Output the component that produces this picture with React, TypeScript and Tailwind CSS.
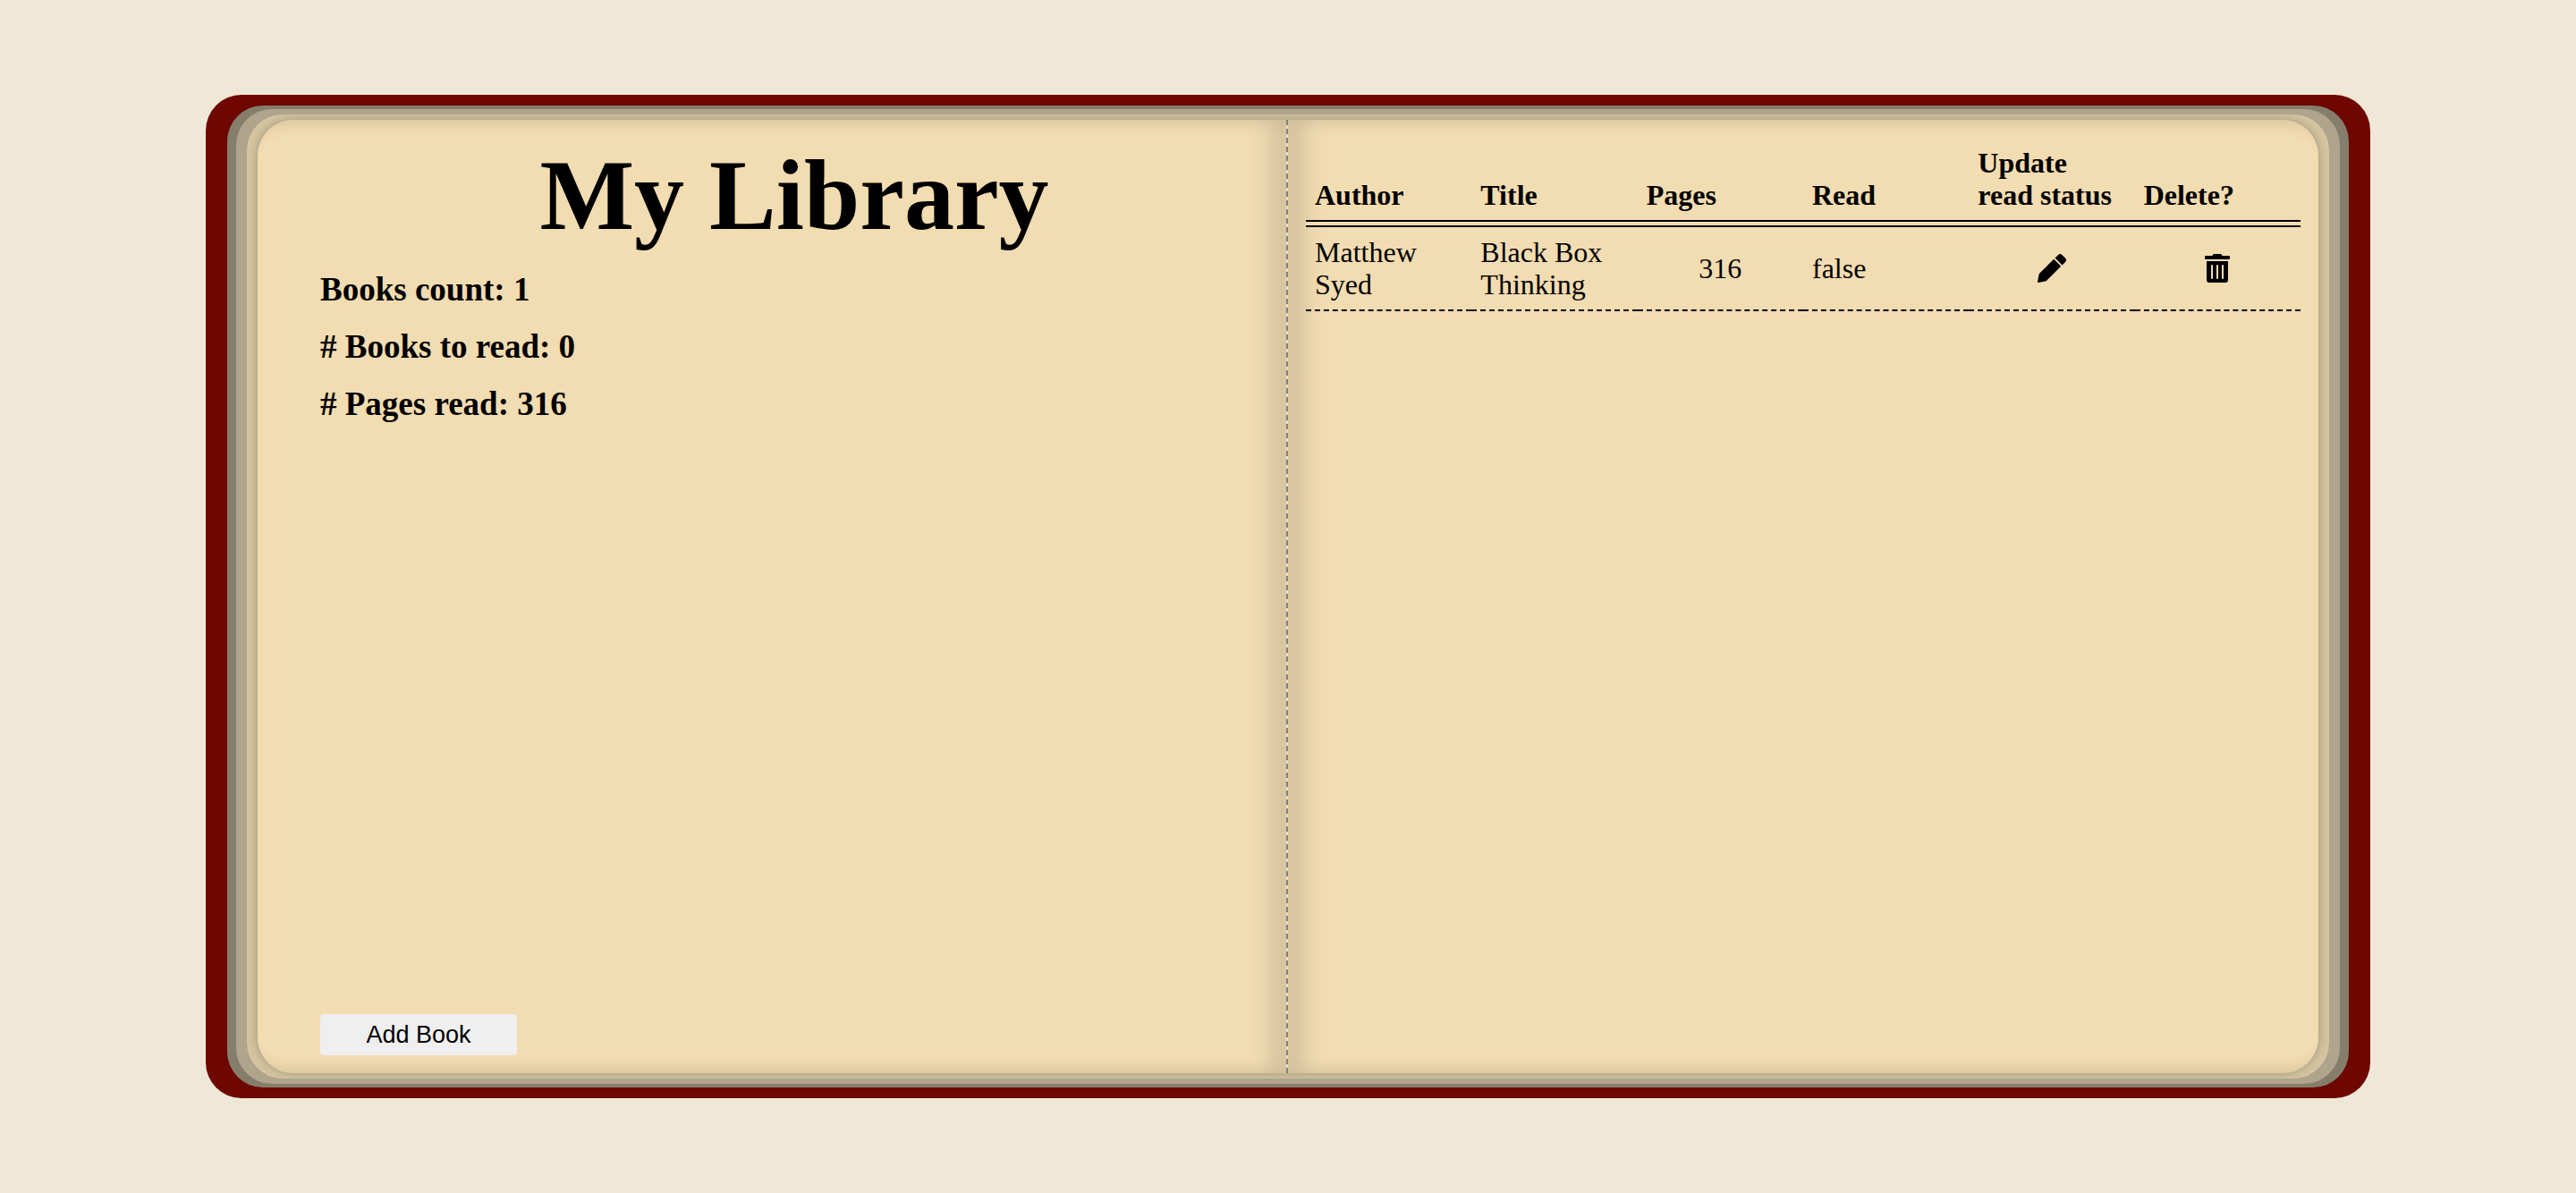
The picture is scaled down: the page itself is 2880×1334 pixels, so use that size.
import React from "react";
import { FaTrashAlt } from "react-icons/fa";

type Book = { author: string; title: string; pages: number; read: boolean };

const books: Book[] = [
  { author: "Matthew Syed", title: "Black Box Thinking", pages: 316, read: false },
];

const stats = [
  { label: "Books count:", value: 1 },
  { label: "# Books to read:", value: 0 },
  { label: "# Pages read:", value: 316 },
];

const headings = ["Author", "Title", "Pages", "Read", "Update read status", "Delete?"];

function PenIcon() {
  return (
    <svg viewBox="0 0 512 512" className="size-8" fill="currentColor" aria-hidden="true">
      <path d="M497.9 74.16L437.8 14.06c-18.75-18.75-49.19-18.75-67.93 0l-56.53 56.55l127.1 128l56.56-56.55C516.7 123.3 516.7 92.91 497.9 74.16zM290.8 93.23l-259.7 259.7c-2.234 2.234-3.755 5.078-4.376 8.176l-26.34 131.7C-1.703 502.1 6.158 511.9 15.95 511.9c1.049 0 2.117-.1035 3.199-.3203l131.7-26.34c3.098-.6191 5.941-2.141 8.175-4.373l259.7-259.7L290.8 93.23z" />
    </svg>
  );
}

function Summary() {
  return (
    <section className="flex flex-col items-start rounded-l-[40px] border-r-2 border-dashed border-[#808080] bg-[#f2dcb1] py-5 pr-5 pl-[70px] shadow-[inset_-20px_0_20px_rgba(125,122,105,0.23),inset_0_20px_20px_-20px_rgba(0,0,0,0.06),inset_0_-20px_20px_-20px_rgba(0,0,0,0.06)]">
      <h1 className="self-center text-[112px] leading-[128px] font-bold">My Library</h1>
      <div className="mt-[10px] text-[37px] leading-[64px] font-bold">
        {stats.map((s) => (
          <h3 key={s.label}>
            {s.label} {s.value}
          </h3>
        ))}
      </div>
      <button
        type="button"
        className="mt-auto h-[46px] w-[220px] rounded bg-[#efefef] font-['Liberation_Sans',Arial,sans-serif] text-[27px]"
      >
        Add Book
      </button>
    </section>
  );
}

function BookTable() {
  return (
    <section className="rounded-r-[40px] bg-[#f2dcb1] p-5 shadow-[inset_20px_0_20px_rgba(125,122,105,0.23),inset_0_20px_20px_-20px_rgba(0,0,0,0.06),inset_0_-20px_20px_-20px_rgba(0,0,0,0.06)]">
      <table className="w-full table-fixed border-separate border-spacing-0 text-[32px] leading-9">
        <thead>
          <tr>
            {headings.map((h) => (
              <th
                key={h}
                scope="col"
                className="border-b-2 border-black px-[10px] pt-[10px] pb-4 text-left align-bottom font-bold shadow-[inset_0_-4px_#f2dcb1,inset_0_-6px_#000]"
              >
                {h}
              </th>
            ))}
          </tr>
        </thead>
        <tbody>
          {books.map((b) => (
            <tr key={b.title}>
              <td className="border-b-2 border-dashed border-black p-[10px]">{b.author}</td>
              <td className="border-b-2 border-dashed border-black p-[10px]">{b.title}</td>
              <td className="border-b-2 border-dashed border-black p-[10px] text-center">{b.pages}</td>
              <td className="border-b-2 border-dashed border-black p-[10px]">{String(b.read)}</td>
              <td className="border-b-2 border-dashed border-black p-[10px]">
                <button type="button" aria-label="Update read status" className="mx-auto block">
                  <PenIcon />
                </button>
              </td>
              <td className="border-b-2 border-dashed border-black p-[10px]">
                <button type="button" aria-label="Delete book" className="mx-auto block">
                  <FaTrashAlt className="h-8 w-7" />
                </button>
              </td>
            </tr>
          ))}
        </tbody>
      </table>
    </section>
  );
}

export default function App() {
  return (
    <main className="grid min-h-screen place-items-center bg-[#f0e8d7] font-['Liberation_Serif','Times_New_Roman',serif] text-black">
      <div className="rounded-[40px] bg-[#6e0700] px-6 py-3">
        <div className="rounded-[40px] bg-[#857e6c] px-[10px] py-1">
          <div className="rounded-[40px] bg-[#b0a48d] px-3 py-[6px]">
            <div className="overflow-hidden rounded-[40px] bg-[#d5c5a1] px-3 py-[6px]">
              <div className="grid min-h-[calc(80vh-1px)] w-[80vw] grid-cols-2 rounded-[40px] shadow-[0_0_12px_rgba(0,0,0,0.25)]">
                <Summary />
                <BookTable />
              </div>
            </div>
          </div>
        </div>
      </div>
    </main>
  );
}
